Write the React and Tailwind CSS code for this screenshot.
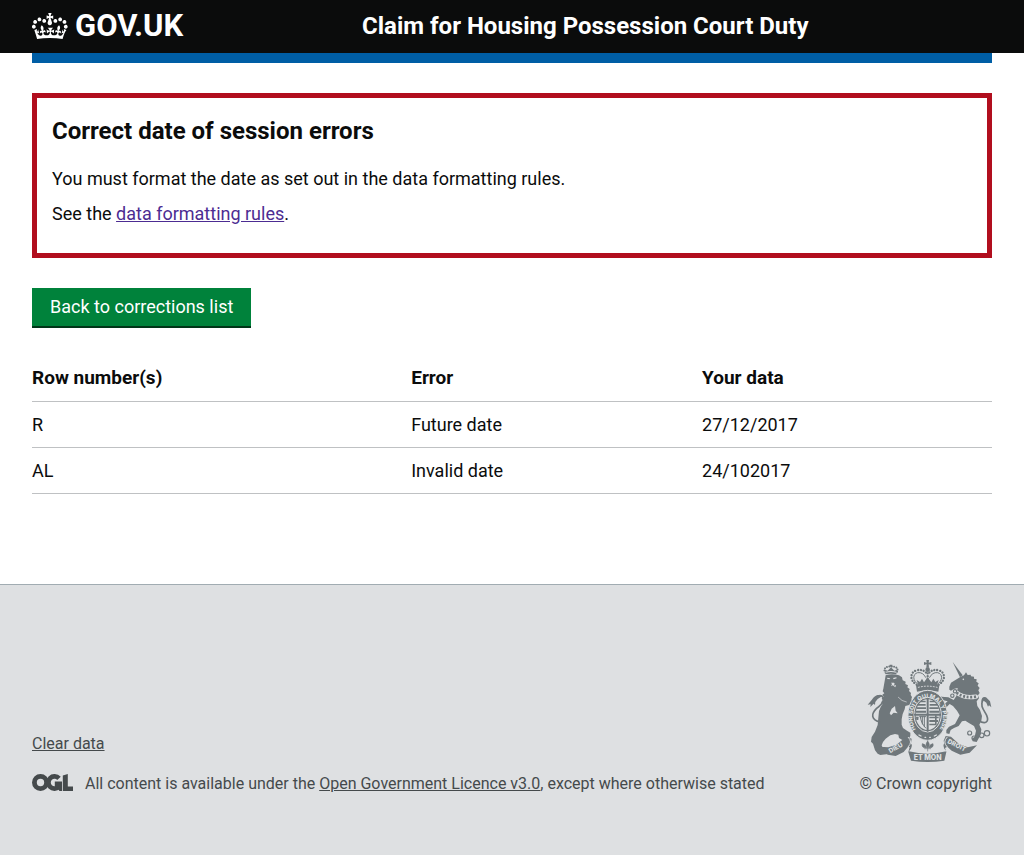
const rows = [
  { row: 'R', error: 'Future date', data: '27/12/2017' },
  { row: 'AL', error: 'Invalid date', data: '24/102017' },
];

function Crown() {
  return (
    <svg className="h-[26px] w-9 shrink-0" viewBox="0 4 36 26" fill="currentColor" aria-hidden="true">
      <path d="M6.7 12.2c1 .4 2.1-.1 2.5-1s-.1-2.1-1-2.5c-1-.4-2.1.1-2.5 1-.4 1 0 2.1 1 2.5m-4.3 2.5c1 .4 2.1-.1 2.5-1s-.1-2.1-1-2.5c-1-.4-2.1.1-2.5 1-.5 1 0 2.1 1 2.5m-1.3 4.8c1 .4 2.1-.1 2.5-1 .4-1-.1-2.1-1-2.5-1-.4-2.1.1-2.5 1-.4 1 0 2.1 1 2.5m10.4-5.8c1 .4 2.1-.1 2.5-1s-.1-2.1-1-2.5c-1-.4-2.1.1-2.5 1s0 2.1 1 2.5m17.4-1.5c-1 .4-2.1-.1-2.5-1s.1-2.1 1-2.5c1-.4 2.1.1 2.5 1 .5 1 0 2.1-1 2.5m4.3 2.5c-1 .4-2.1-.1-2.5-1s.1-2.1 1-2.5c1-.4 2.1.1 2.5 1 .5 1 0 2.1-1 2.5m1.3 4.8c-1 .4-2.1-.1-2.5-1-.4-1 .1-2.1 1-2.5 1-.4 2.1.1 2.5 1 .4 1 0 2.1-1 2.5m-10.4-5.8c-1 .4-2.1-.1-2.5-1s.1-2.1 1-2.5c1-.4 2.1.1 2.5 1s0 2.1-1 2.5m-5.3-4.9 2.4 1.3V6.5l-2.4.8c-.1-.1-.1-.2-.2-.2s1-3 1-3h-3.4l1 3c-.1.1-.2.1-.2.2-.1.1-2.4-.7-2.4-.7v3.5L17 8.8c-.1.1 0 .2.1.3l-1.4 4.2c-.1.2-.1.4-.1.7 0 1.1.8 2.1 1.9 2.2h.6C19.2 16 20 15.1 20 14c0-.2 0-.4-.1-.7l-1.4-4.2c.2-.1.3-.2.3-.3m-1 20.3c4.6 0 8.9.3 12.8.9 1.1-4.6 2.4-7.2 3.8-9.1l-2.6-.9c.3 1.3.3 1.9 0 2.8-.4-.4-.8-1.2-1.1-2.4l-1.2 4.2c.8-.5 1.4-.9 2-.9-1.2 2.6-2.7 3.2-3.6 3-1.2-.2-1.7-1.3-1.5-2.2.3-1.3 1.6-1.6 2.2-.1 1.2-2.4-.8-3.1-2.1-2.4 1.9-1.9 2.2-3.6.6-5.7-2.2 1.7-2.2 3.3-1.2 5.6-1.3-1.5-3.3-.7-2.5 1.7.9-1.4 2.1-.5 1.9.8-.2 1.1-1.7 2-3.5 1.9-2.7-.2-2.9-2.1-2.9-3.6.7-.1 1.9.5 2.9 1.9l.4-4.3c-1.1 1.1-2.1 1.4-3.2 1.4.4-1.2 2.1-3 2.1-3h-5.4s1.7 1.9 2.1 3c-1.1 0-2.1-.2-3.2-1.4l.4 4.3c1-1.4 2.2-2 2.9-1.9-.1 1.5-.2 3.4-2.9 3.6-1.9.1-3.4-.8-3.5-1.9-.2-1.3 1-2.2 1.9-.8.7-2.3-1.2-3.1-2.5-1.7 1-2.3 1-3.9-1.2-5.6-1.6 2-1.3 3.8.6 5.7-1.3-.7-3.2 0-2.1 2.4.6-1.5 1.9-1.1 2.2.1.2.9-.3 1.9-1.5 2.2-.9.2-2.5-.5-3.6-3 .6 0 1.2.3 2 .9l-1.2-4.2c-.3 1.1-.7 1.9-1.1 2.4-.3-.9-.2-1.6 0-2.8l-2.6.9C2.7 22.8 4 25.4 5.1 30c3.9-.6 8.2-.9 12.7-.9" />
    </svg>
  );
}

function OglLogo() {
  return (
    <svg
      className="h-[17px] w-[41px] shrink-0 self-start"
      viewBox="0 0 41 17"
      role="img"
      aria-label="Open Government Licence"
      fill="#454a4c"
      stroke="#454a4c"
    >
      <g fill="none" strokeWidth="4.8">
        <circle cx="8.5" cy="8.5" r="6.1" />
        <path d="M27 4.400A6.100 6.100 0 1 0 27 12.600" />
      </g>
      <path d="M22.800 7.600H30V17h-2.600l-1-2-2-1.600h-1.600zM30.800 1.600l5-1.600v12.400H41V17H30.800z" stroke="none" />
    </svg>
  );
}

function Crest() {
  return (
    <svg
      className="h-[102px] w-[125px]"
      viewBox="36 30 375 306"
      aria-hidden="true"
      fill="#6f777b"
      stroke="#6f777b"
      strokeLinejoin="round"
      strokeLinecap="round"
    >
      {/* lion */}
      <g transform="translate(30 30)">
        <g stroke="none">
          <path d="M74 14h8v6h-8zM62 43l-2-14 8 3 10-10 10 10 8-3-2 14q-16-4-32 0z" />
          <path d="M62 46q18-7 40 0l9 6 2 9 9 4-1 7 8 4-2 6 7 5-2 6 6 6-1 6 4 6-2 7 4 8-8 8-14 4-2 10-6 14-3 16 0 16 4 10 12 8 10 6 0 10-8 14-8-4-8 2-10-6-2-10-10-2-14 4-14 10-8 10-4 10 4 10 10 6 8 4-2 6-24 3-8-4-8-10-6-20-6-6 2-14 10-16 8-20 2-22 2-20 5-12 6-10-5-4 6-6-4-6 6-5-4-6 6-4-5-6 2-8z" />
        </g>
        <g fill="none" strokeWidth="6" strokeDasharray="0.1 7">
          <path d="M62 38c-10-12 2-20 16-18c14-2 26 6 16 18" />
        </g>
        <path d="M44 186C18 178 18 162 34 146c14-12 26-22 20-34q-4-8-16-4" fill="none" strokeWidth="5" />
        <path d="M52 108q-18-10-32 12l-12 14 9-1-1 8 10-10 4 4q0-12 8-18z" stroke="none" />
        <g fill="#dee0e2" stroke="none">
          <path d="M67 53l9 2-3 3-7-2zM84 54l10-2 1 3-9 3zM78 68h9l2 3-3 6 7-2-2 7-8-6-5 3 3-7z" />
          <path d="M90 138l-10 8-6 14 4 6 8-8 12 2-6-8zM62 35q16-4 32 0v3q-16-4-32 0z" />
        </g>
        <path d="M100 112q10 12 24 14" fill="none" stroke="#dee0e2" strokeWidth="2" />
      </g>

      {/* unicorn */}
      <g transform="translate(213 24)">
        <g stroke="none">
          <path d="M80 12l30 40-8 6z" />
          <path d="M104 56l10-4 6-9 5 8 9-1 1 5 9 1 0 6 8 2-1 7 7 5-3 7 6 7-4 7 4 8-5 7 3 9-7 9 2 14 8 12 6 18-2 14-6 12 6 14-2 16-12 22-12-2-2-8 8-6 4-18-6-14-14-8-12-8-10 2-10 14-14 6-10 6-4 12-9-2 0-10 8-10 18-8 14-26-8-14-12-14-10-6-12 12-2 8 10 6-2 6-12-4-8-12 8-14 12-10-16-4-12 2-8-12 8-4 10 4 20 2 16 8 8-12 2-14 2-10-12 3-8 5-5-3 0-9 5-12z" />
        </g>
        <path d="M156 186c22 16 34 6 26-14-10-18-20-30-12-44" fill="none" strokeWidth="5" />
        <path d="M166 132q0-18 14-14l12 12 4 18-7-6-3 4-5-12-8-6z" stroke="none" />
        <path d="M92 104q22 18 58 12" fill="none" stroke="#dee0e2" strokeWidth="13" />
        <path d="M92 104q22 18 58 12" fill="none" strokeWidth="8" strokeDasharray="6 5" strokeLinecap="butt" />
        <circle cx="112" cy="64" r="2.5" fill="#dee0e2" stroke="none" />
        <g fill="none" strokeWidth="3.5">
          <circle cx="87" cy="100" r="5" />
          <circle cx="79" cy="113" r="5" />
          <circle cx="131" cy="225" r="6" />
          <circle cx="144" cy="240" r="6" />
          <circle cx="167" cy="232" r="7" />
          <circle cx="183" cy="226" r="8" />
        </g>
      </g>

      {/* central crown */}
      <g stroke="none">
        <path d="M214 30h8l-1 8 8-2v9l-8-2 1 10h-8l1-10-8 2v-9l8 2z" />
        <circle cx="218" cy="59" r="7" />
        <path d="M183 106q35-10 70 0l-3 19q-32-7-64 0z" />
        <path d="M190 106l-5-16 10 6 6-10 6 11 11-15 11 15 6-11 6 10 10-6-5 16z" />
      </g>
      <g fill="none" strokeWidth="7" strokeDasharray="0.1 8.5">
        <path d="M185 104C164 92 164 68 184 61q22-5 32 11" />
        <path d="M251 104c21-12 21-36 1-43q-22-5-32 11" />
        <path d="M218 70v22" />
      </g>
      <g fill="none" strokeWidth="3">
        <path d="M190 104C172 92 172 72 188 68q16-2 24 14" />
        <path d="M246 104c18-12 18-32 2-36q-16-2-24 14" />
      </g>
      <path d="M190 112q28-7 56 0" fill="none" stroke="#dee0e2" strokeWidth="3" strokeDasharray="3 6" />

      {/* garter and shield */}
      <ellipse cx="218" cy="196" rx="59" ry="75" stroke="#dee0e2" strokeWidth="3" />
      <ellipse cx="218" cy="194" rx="41" ry="52" fill="none" stroke="#dee0e2" strokeWidth="3" />
      <ellipse cx="218" cy="194" rx="36" ry="46" fill="#dee0e2" stroke="none" />
      <path d="M218 146v96M180 194h76" fill="none" strokeWidth="6" />
      <g stroke="none">
        <path d="M188 162h24v5h-24zM185 172h28v5h-28zM183 182h30v6h-30z" />
        <path d="M224 162h24v5h-24zM223 172h28v5h-28zM223 182h30v6h-30z" />
        <path d="M196 152h16v5h-16zM224 152h16v5h-16zM223 200h28v5h-28zM223 210h26v6h-26zM223 221h20v5h-20z" />
        <path d="M183 200h8l-1 10h-6zM240 196h5v28h-5z" />
      </g>
      <path d="M196 200q2 20 16 34M202 200v22M208 200v30M194 200h18" fill="none" strokeWidth="3" />
      <path id="garter" d="M184 240A46 58 0 1 1 252 240" fill="none" stroke="none" />
      <text
        className="font-['Inter',sans-serif] text-[17px] font-extrabold"
        fill="#dee0e2"
        stroke="none"
      >
        <textPath href="#garter" startOffset="2">HONI SOIT QUI MAL Y PENSE</textPath>
      </text>
      <path d="M192 255l6 3m12 4h2m12 0h2m12-4l6-3" stroke="#dee0e2" strokeWidth="4" />

      {/* motto scroll */}
      <g stroke="none">
        <path d="M74 290l26 2 24-8 30-24 16 6-2 14-22 26-24 12-24-4z" />
        <path d="M150 286q28-14 18 10l-6 8q56 14 112 0l-6-8q-10-24 18-10l-16 8 4 12-6 26q-50 8-100 0l-8-26 4-14z" />
        <path d="M266 272l6-14 16 2 24 22 26 10 28-6-22 22-28 6-26-12-22-20z" />
      </g>
      <path d="M160 262q14 14 0 28M276 262q-14 14 0 28" fill="none" stroke="#dee0e2" strokeWidth="3" />
      <g className="font-['Inter',sans-serif] font-extrabold" fill="#dee0e2" stroke="none">
        <text className="text-[21px]" x="176" y="331">ET MON</text>
        <text className="text-[19px]" transform="translate(106 310) rotate(-30)">DIEU</text>
        <text className="text-[19px]" transform="translate(276 278) rotate(27)">DROIT</text>
      </g>
      <path d="M218 273q-10 12 0 22q10-10 0-22zM214 293q-15 2-12-12 9 0 12 12zM222 293q15 2 12-12-9 0-12 12zM209 296h18M218 297v6" strokeWidth="2" />
    </svg>
  );
}

export default function App() {
  return (
    <div className="flex min-h-screen flex-col bg-[#dee0e2] font-['Roboto',sans-serif] text-[#0b0c0c]">
      <header className="bg-[#0b0c0c] text-white">
        <div className="mx-auto grid h-[53px] max-w-5xl grid-cols-[330px_1fr] items-center px-8 pb-[1px]">
          <a href="#home" className="flex items-center gap-[7px]">
            <Crown />
            <span className="text-[31px] leading-8 font-bold">GOV.UK</span>
          </a>
          <a href="#service" className="text-2xl font-bold">Claim for Housing Possession Court Duty</a>
        </div>
      </header>

      <div className="bg-white pb-[90px]">
        <main className="mx-auto max-w-5xl px-8">
          <div className="h-[10px] bg-[#005ea5]" />
          <section className="mt-[30px] border-5 border-[#b10e1e] px-[15px] pt-[18px] pb-[27px]" aria-labelledby="errors-title">
            <h1 id="errors-title" className="text-2xl leading-[30px] font-bold">Correct date of session errors</h1>
            <p className="mt-5 text-lg leading-[25px]">
              You must format the date as set out in the data formatting rules.
            </p>
            <p className="mt-[10px] text-lg leading-[25px]">
              See the <a href="#rules" className="text-[#4c2c92] underline">data formatting rules</a>.
            </p>
          </section>

          <button
            type="button"
            className="mt-[30px] block h-10 border-b-2 border-[#003618] bg-[#00823b] px-[18px] text-lg text-white"
          >
            Back to corrections list
          </button>

          <table className="mt-[27px] w-full table-fixed border-collapse text-left leading-[25px]">
            <colgroup>
              <col className="w-[39.5%]" />
              <col className="w-[30.3%]" />
              <col />
            </colgroup>
            <thead className="text-[19px]">
              <tr className="h-[46px] border-b border-[#bfc1c3]">
                <th scope="col" className="font-bold">Row number(s)</th>
                <th scope="col" className="font-bold">Error</th>
                <th scope="col" className="font-bold">Your data</th>
              </tr>
            </thead>
            <tbody className="text-lg leading-[25px]">
              {rows.map((r) => (
                <tr key={r.row} className="h-[46px] border-b border-[#bfc1c3]">
                  <td>{r.row}</td>
                  <td>{r.error}</td>
                  <td>{r.data}</td>
                </tr>
              ))}
            </tbody>
          </table>
        </main>
      </div>

      <footer className="border-t border-[#a1acb2] pt-[75px] pb-[60px] text-base leading-5 text-[#454a4c]">
        <div className="mx-auto flex max-w-5xl items-end justify-between px-8">
          <div>
            <a href="#clear" className="underline">Clear data</a>
            <div className="mt-5 flex items-center gap-3">
              <OglLogo />
              <p>
                All content is available under the{' '}
                <a href="#licence" className="underline">Open Government Licence v3.0</a>, except where otherwise stated
              </p>
            </div>
          </div>
          <a href="#copyright" className="flex flex-col items-end gap-3">
            <Crest />
            <span>© Crown copyright</span>
          </a>
        </div>
      </footer>
    </div>
  );
}
